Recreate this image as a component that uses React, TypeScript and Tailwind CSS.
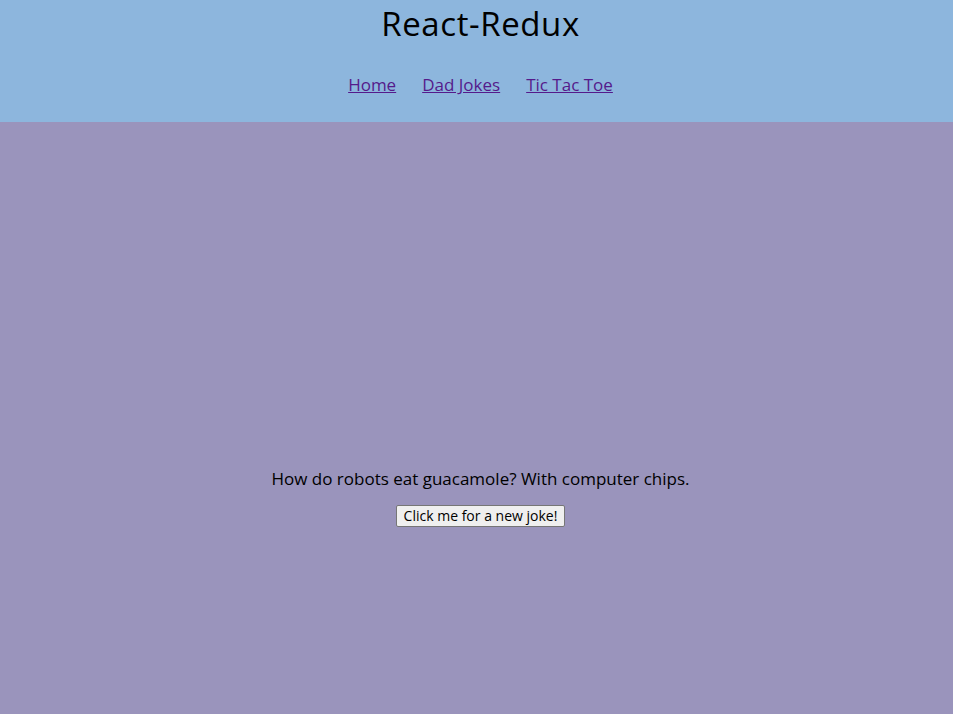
import React, { useState } from 'react';

const jokes = [
  'How do robots eat guacamole? With computer chips.',
  'Why did the scarecrow win an award? He was outstanding in his field.',
  'I only know 25 letters of the alphabet. I don\'t know y.',
];

function App() {
  const [index, setIndex] = useState(0);

  const nextJoke = () => {
    setIndex((i) => (i + 1) % jokes.length);
  };

  return (
    <div className="min-h-[714px] bg-[#9a94bc] font-['Open_Sans',sans-serif] text-black">
      <header className="h-[122px] bg-[#8db6dd] flex flex-col items-center pl-[8px]">
        <h1 className="mt-[3px] text-[33px] leading-[42px] tracking-[0.6px]">React-Redux</h1>
        <nav className="mt-[28px] flex gap-[26px] text-[17px] leading-[24px]">
          <a href="#" className="underline text-[#551a8b]">Home</a>
          <a href="#" className="underline text-[#551a8b]">Dad Jokes</a>
          <a href="#" className="underline text-[#551a8b]">Tic Tac Toe</a>
        </nav>
      </header>

      <main className="flex flex-col items-center pt-[345px] pl-[8px]">
        <p className="text-[17px] leading-[24px]">{jokes[index]}</p>
        <button
          onClick={nextJoke}
          className="mt-[14px] px-[7px] h-[22px] text-[14px] leading-[18px] bg-[#efefef] border border-[#767676] rounded-[2px]"
        >
          Click me for a new joke!
        </button>
      </main>
    </div>
  );
}

export default App;
